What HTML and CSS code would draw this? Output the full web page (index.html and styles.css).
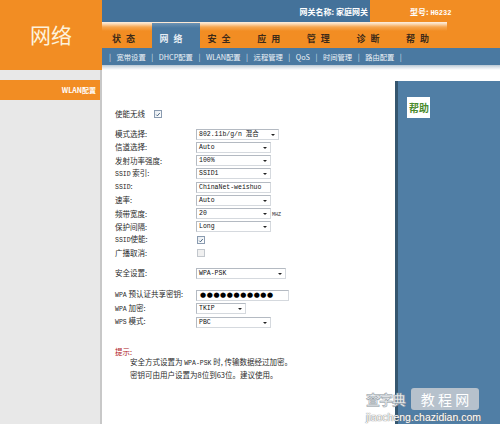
FILE: index.html
```html
<!DOCTYPE html>
<html lang="zh-CN">
<head>
<meta charset="utf-8">
<title>网络 - WLAN配置</title>
<link rel="stylesheet" href="styles.css">
</head>
<body>
<div class="page">
  <header class="hdr">
    <div class="logo">网络</div>
    <div class="hdr-r">
      <div class="topbar">
        <div class="gw">网关名称: 家庭网关</div>
        <div class="model">型号: <span class="latin">HG232</span></div>
      </div>
      <nav class="tabs">
        <span class="tab">状态</span>
        <span class="tab active">网络</span>
        <span class="tab">安全</span>
        <span class="tab">应用</span>
        <span class="tab">管理</span>
        <span class="tab">诊断</span>
        <span class="tab">帮助</span>
      </nav>
      <div class="subnav">
        <span class="bar">|</span><span class="sub">宽带设置</span>
        <span class="bar">|</span><span class="sub">DHCP配置</span>
        <span class="bar">|</span><span class="sub">WLAN配置</span>
        <span class="bar">|</span><span class="sub">远程管理</span>
        <span class="bar">|</span><span class="sub">QoS</span>
        <span class="bar">|</span><span class="sub">时间管理</span>
        <span class="bar">|</span><span class="sub">路由配置</span>
        <span class="bar">|</span>
      </div>
      <div class="strip"></div>
    </div>
  </header>

  <div class="body">
    <aside class="side">
      <div class="side-item">WLAN配置</div>
    </aside>

    <main class="main">
      <div class="row">
        <span class="lbl short">使能无线</span>
        <span class="cb on"><svg viewBox="0 0 8 8" width="8" height="8"><path d="M1.6 4.2 L3.2 5.8 L6.4 2" fill="none" stroke="#2b4a6a" stroke-width="1.1"/></svg></span>
      </div>

      <div class="group g2">
        <div class="row"><span class="lbl">模式选择:</span><span class="sel w83"><span class="v">802.11b/g/n 混合</span><i class="arr"></i></span></div>
        <div class="row"><span class="lbl">信道选择:</span><span class="sel w75"><span class="v">Auto</span><i class="arr"></i></span></div>
        <div class="row"><span class="lbl">发射功率强度:</span><span class="sel w75"><span class="v">100%</span><i class="arr"></i></span></div>
        <div class="row"><span class="lbl"><span class="m">SSID</span> 索引:</span><span class="sel w75"><span class="v">SSID1</span><i class="arr"></i></span></div>
        <div class="row"><span class="lbl"><span class="m">SSID</span>:</span><span class="inp w75"><span class="v">ChinaNet-weishuo</span></span></div>
        <div class="row"><span class="lbl">速率:</span><span class="sel w75"><span class="v">Auto</span><i class="arr"></i></span></div>
        <div class="row"><span class="lbl">频带宽度:</span><span class="sel w75"><span class="v">20</span><i class="arr"></i></span><span class="unit">MHZ</span></div>
        <div class="row"><span class="lbl">保护间隔:</span><span class="sel w75"><span class="v">Long</span><i class="arr"></i></span></div>
        <div class="row"><span class="lbl"><span class="m">SSID</span>使能:</span><span class="cb on"><svg viewBox="0 0 8 8" width="8" height="8"><path d="M1.6 4.2 L3.2 5.8 L6.4 2" fill="none" stroke="#2b4a6a" stroke-width="1.1"/></svg></span></div>
        <div class="row"><span class="lbl">广播取消:</span><span class="cb off"></span></div>
      </div>

      <div class="group g3">
        <div class="row"><span class="lbl">安全设置:</span><span class="sel w90"><span class="v">WPA-PSK</span><i class="arr"></i></span></div>
      </div>

      <div class="group g4">
        <div class="row r4"><span class="lbl"><span class="m">WPA</span> 预认证共享密钥:</span><span class="inp w93 pw"><span class="dots">●●●●●●●●●●●</span></span></div>
        <div class="row r4"><span class="lbl"><span class="m">WPA</span> 加密:</span><span class="sel w50"><span class="v">TKIP</span><i class="arr"></i></span></div>
        <div class="row r4"><span class="lbl"><span class="m">WPS</span> 模式:</span><span class="sel w75"><span class="v">PBC</span><i class="arr"></i></span></div>
      </div>

      <div class="tip">
        <div class="tip-t">提示:</div>
        <div class="tip-l">安全方式设置为 <span class="m">WPA-PSK</span> 时, 传输数据经过加密。</div>
        <div class="tip-l">密钥可由用户设置为8位到63位。建议使用。</div>
      </div>
    </main>

    <aside class="help">
      <div class="help-title">帮助</div>
    </aside>
  </div>

  <div class="wm">
    <div class="wm-top"><span class="wm-a">查字典</span><span class="wm-b">教 程 网</span></div>
    <div class="wm-url">jiaocheng.chazidian.com</div>
  </div>
</div>
</body>
</html>
```

FILE: styles.css
```css
* { box-sizing: border-box; }
html, body { margin: 0; padding: 0; }
body {
  width: 500px;
  height: 424px;
  overflow: hidden;
  background: #ffffff;
  font-family: "Noto Sans CJK SC", "DejaVu Sans", sans-serif;
  color: #333;
}
.page {
  position: relative;
  width: 500px;
  height: 424px;
  display: flex;
  flex-direction: column;
}

/* header */
.hdr { display: flex; height: 70px; flex: none; }
.logo {
  width: 102px;
  height: 70px;
  background: #f28d23;
  color: #fdf2dc;
  font-size: 21px;
  line-height: 22px;
  padding: 23px 0 0 30px;
  letter-spacing: 0;
}
.hdr-r { flex: 1; display: flex; flex-direction: column; }
.topbar { height: 22px; display: flex; }
.gw {
  width: 268px;
  background: #44729a;
  color: #ffffff;
  font-size: 8px;
  font-weight: bold;
  text-align: right;
  padding-right: 2px;
  line-height: 24px;
}
.model {
  flex: 1;
  background: #f28d23;
  color: #ffffff;
  font-size: 8px;
  font-weight: bold;
  padding-left: 40px;
  line-height: 24px;
}
.latin { font-family: "Liberation Mono", monospace; font-size: 7px; }

.tabs {
  height: 26px;
  display: flex;
  align-items: stretch;
  background-color: #f28d23;
  background-image: linear-gradient(to bottom, #fdf0e2 0, #fbd8b2 2px, #f6a650 5px, #f28d23 9px);
  background-size: 345px 100%;
  background-repeat: no-repeat;
  padding-top: 1px;
}
.tab {
  width: 49.6px;
  padding: 11px 0 0 8px;
  font-size: 9px;
  font-weight: bold;
  letter-spacing: 5px;
  color: #3d2a18;
  line-height: 10px;
}
.tab:first-child { padding-left: 10px; }
.tab.active {
  width: 48px;
  background: linear-gradient(to bottom, #6d93b4 0, #4a79a1 5px, #4a79a1 100%);
  color: #e6edf3;
}

.subnav {
  height: 17px;
  background: #4a79a1;
  display: flex;
  align-items: center;
  padding-left: 7px;
  color: #eef3f7;
  font-size: 7.3px;
  line-height: 10px;
}
.bar { width: 2px; text-align: center; color: #dfe7ee; }
.sub { padding: 0 5.5px; }

.strip {
  height: 5px;
  background: linear-gradient(to bottom, #b8c6d2 0, #d9e1e8 2px, #f3f5f7 4px, #ffffff 5px);
}

/* body */
.body { flex: 1; display: flex; }
.side {
  width: 102px;
  background: #e8e8e8;
  border-right: 2px solid #c8c8c8;
  padding-top: 10px;
}
.side-item {
  height: 20px;
  background: #f28d23;
  color: #ffffff;
  font-size: 7px;
  font-weight: bold;
  text-align: right;
  padding-right: 4px;
  line-height: 20px;
}

.main {
  flex: 1;
  padding: 37.5px 0 0 13px;
  font-size: 7.5px;
  color: #2a2a2a;
}
.row { display: flex; align-items: center; height: 13px; }
.g2 { margin-top: 7px; }
.g2 .row { height: 13.25px; }
.g3 { margin-top: 6.5px; }
.g4 { margin-top: 8.75px; }
.row.r4 { height: 13.5px; }
.lbl { width: 81px; flex: none; line-height: 10px; white-space: nowrap; }
.lbl.short { width: 38px; }
.m { font-family: "Liberation Mono", monospace; font-size: 6.5px; }

.sel, .inp {
  position: relative;
  height: 11px;
  border: 1px solid #b4bac2;
  border-right-color: #d5d9de;
  border-bottom-color: #d5d9de;
  background: #ffffff;
  display: flex;
  align-items: center;
  padding-left: 2px;
  font-family: "Liberation Mono", "Noto Sans CJK SC", monospace;
  font-size: 6.5px;
  color: #111;
  line-height: 9px;
}
.w83 { width: 83px; }
.w75 { width: 75px; }
.w90 { width: 90px; }
.w93 { width: 93px; }
.w50 { width: 50px; }
.v { white-space: nowrap; }
.arr {
  position: absolute;
  right: 3px;
  top: 4px;
  width: 0;
  height: 0;
  border-left: 2px solid transparent;
  border-right: 2px solid transparent;
  border-top: 2.5px solid #222;
}
.unit {
  font-family: "Liberation Mono", monospace;
  font-size: 5px;
  margin-left: 1px;
  padding-top: 3px;
  color: #333;
}
.pw { padding-left: 3px; }
.dots { font-family: "DejaVu Sans", sans-serif; font-size: 7px; letter-spacing: 0.6px; color: #000; }

.cb {
  width: 8px;
  height: 8px;
  border: 1px solid #8a9bb0;
  background: linear-gradient(135deg, #e6ebf0, #ffffff);
  display: flex;
  align-items: center;
  justify-content: center;
  margin-left: 1px;
}
.cb svg { display: block; width: 7px; height: 7px; }
.cb.off { border-color: #c2c7cd; background: #f0f0f0; }

.tip { margin-top: 18px; line-height: 10.5px; }
.tip-t { color: #b0161a; }
.tip-l { padding-left: 15px; white-space: nowrap; }

/* help */
.help {
  width: 105px;
  margin-top: 11px;
  background: #507ea5;
  border-left: 3px solid #35566f;
  padding: 12px 0 0 9px;
}
.help-title {
  display: inline-block;
  background: #ffffff;
  color: #4a8a2c;
  font-size: 10px;
  font-weight: bold;
  line-height: 13px;
  padding: 4px 1px 4px 2px;
}

/* watermark overlay */
.wm {
  position: absolute;
  left: 366px;
  top: 388px;
  width: 132px;
}
.wm-top { display: flex; align-items: center; }
.wm-a {
  font-size: 14px;
  font-weight: bold;
  color: #e8ecef;
  -webkit-text-stroke: 0.5px #8d96a0;
  letter-spacing: -1px;
  line-height: 20px;
}
.wm-b {
  margin-left: 6px;
  background: rgba(200, 205, 210, 0.85);
  color: #ffffff;
  border-radius: 3px;
  font-size: 14px;
  line-height: 22px;
  padding: 0 5px;
  width: 68px;
  text-align: center;
}
.wm-url {
  font-family: "Liberation Sans", sans-serif;
  font-size: 10.5px;
  color: #ffffff;
  text-shadow: 0 0 1px #777, 0 0 1px #777;
  line-height: 12px;
  margin-top: 1px;
}
```
